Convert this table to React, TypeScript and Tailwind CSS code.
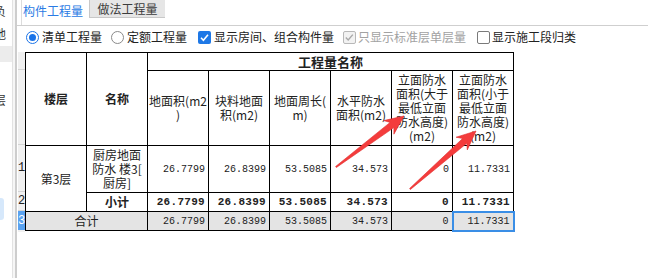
import React from 'react';

const CJK = { fontFamily: '"Noto Sans CJK SC", "Noto Sans", sans-serif' };
const MONO = { fontFamily: '"Liberation Mono", "DejaVu Sans Mono", monospace' };

const values = ['26.7799', '26.8399', '53.5085', '34.573', '0', '11.7331'];

const headers: string[][] = [
  ['地面积(m2', ')'],
  ['块料地面', '积(m2)'],
  ['地面周长(', 'm)'],
  ['水平防水', '面积(m2)'],
  ['立面防水', '面积(大于', '最低立面', '防水高度)', '(m2)'],
  ['立面防水', '面积(小于', '最低立面', '防水高度)', '(m2)'],
];

const arrows = [
  { tail: [336, 167], tip: [404, 116] },
  { tail: [410, 189], tip: [476, 131] },
];

// tapered arrow like a screenshot-tool annotation
function arrowPoints(tail: number[], tip: number[]) {
  const dx = tip[0] - tail[0];
  const dy = tip[1] - tail[1];
  const len = Math.hypot(dx, dy);
  const ux = dx / len;
  const uy = dy / len;
  const nx = -uy;
  const ny = ux;
  const neck = [tip[0] - ux * 19, tip[1] - uy * 19];
  const inner = [tip[0] - ux * 15, tip[1] - uy * 15];
  const p = (b: number[], s: number) => `${(b[0] + nx * s).toFixed(1)},${(b[1] + ny * s).toFixed(1)}`;
  return [p(tail, 0.6), p(inner, 3.2), p(neck, 8.5), `${tip[0]},${tip[1]}`, p(neck, -8.5), p(inner, -3.2), p(tail, -0.6)].join(' ');
}

const Radio = ({ on }: { on?: boolean }) => (
  <span className={`flex h-[13px] w-[13px] items-center justify-center rounded-full border bg-white ${on ? 'border-[#1a73e8]' : 'border-[#8a8a8a]'}`}>
    {on && <span className="h-[7px] w-[7px] rounded-full bg-[#1a73e8]" />}
  </span>
);

const Check = ({ state }: { state: 'on' | 'off' | 'disabled' }) => {
  if (state === 'on')
    return (
      <span className="flex h-[13px] w-[13px] items-center justify-center rounded-[2px] bg-[#1e78e6]">
        <svg width="11" height="11" viewBox="0 0 11 11">
          <path d="M2 5.8 L4.4 8.2 L9 2.8" fill="none" stroke="#fff" strokeWidth="1.6" />
        </svg>
      </span>
    );
  if (state === 'disabled')
    return (
      <span className="flex h-[13px] w-[13px] items-center justify-center rounded-[2px] border border-[#b8b8b8] bg-[#f2f2f2]">
        <svg width="11" height="11" viewBox="0 0 11 11">
          <path d="M1.8 5.6 L4.2 8 L8.8 2.6" fill="none" stroke="#a8a8a8" strokeWidth="1.4" />
        </svg>
      </span>
    );
  return <span className="block h-[13px] w-[13px] rounded-[2px] border border-[#7a7a7a] bg-white" />;
};

const App = () => {
  return (
    <div className="relative flex h-[278px] w-[648px] overflow-hidden bg-white text-[12px] text-[#222]" style={CJK}>
      {/* left side panel, cut off */}
      <div className="flex w-[13px] flex-col overflow-hidden border-r border-[#e2e2e2] text-[#333]">
        <div className="flex h-[22px] items-center -ml-[6px]">负</div>
        <div className="flex h-[24px] items-center -ml-[6px]">地</div>
        <div className="h-[16px] bg-[#ececec]" />
        <div className="h-[28px]" />
        <div className="flex h-[20px] items-center -ml-[6px]">层</div>
        <div className="h-[88px]" />
        <div className="h-[22px] w-[4px] rounded-r-[3px] bg-[#d6e8fb]" />
      </div>
      <div className="w-[2px] bg-[#f6f6f6]" />
      <div className="w-[2px] bg-[#cdcdcd]" />

      {/* main panel */}
      <div className="flex flex-1 flex-col">
        {/* tabs */}
        <div className="flex h-[26px] items-start border-b border-[#cfcfcf]">
          <div className="ml-[4px] flex h-[25px] w-[68px] items-start border-l border-[#dcdcdc] bg-white pl-[1px] pt-[2px] text-[#2a7be4]">
            构件工程量
          </div>
          <div className="flex h-[18px] w-[76px] items-center justify-center border-b border-l border-[#c8c8c8] bg-[#e6e6e6] text-[#3c3c3c]">
            做法工程量
          </div>
        </div>

        {/* options */}
        <div className="flex h-[22px] items-center">
          <span className="ml-[9px]"><Radio on /></span>
          <span className="ml-[3px]">清单工程量</span>
          <span className="ml-[9px]"><Radio /></span>
          <span className="ml-[3px]">定额工程量</span>
          <span className="ml-[11px]"><Check state="on" /></span>
          <span className="ml-[3px]">显示房间、组合构件量</span>
          <span className="ml-[9px]"><Check state="disabled" /></span>
          <span className="ml-[2px] text-[#a2a2a2]">只显示标准层单层量</span>
          <span className="ml-[11px]"><Check state="off" /></span>
          <span className="ml-[2px]">显示施工段归类</span>
        </div>

        {/* grid */}
        <div className="mt-[4px] flex">
          <div className="ml-[1px] flex w-[7px] flex-col overflow-hidden bg-[#f0f0f0] text-[12px] leading-none" style={MONO}>
            <div className="h-[18px] border-b border-[#d4d4d4]" />
            <div className="h-[75px] border-b border-[#d4d4d4]" />
            <div className="flex h-[47px] items-center border-b border-[#d4d4d4]">1</div>
            <div className="flex h-[19px] items-center border-b border-[#d4d4d4]">2</div>
            <div className="flex h-[19px] items-center bg-[#5aa2f0] text-white">3</div>
          </div>

          <table className="w-[489px] table-fixed border-collapse">
            <colgroup>
              {Array.from({ length: 8 }).map((_, i) => (
                <col key={i} className="w-[61px]" />
              ))}
            </colgroup>
            <thead>
              <tr className="h-[18px]">
                <th rowSpan={2} className="border border-black font-bold">楼层</th>
                <th rowSpan={2} className="border border-black font-bold">名称</th>
                <th colSpan={6} className="border border-black p-0 text-[13px] font-bold leading-none">工程量名称</th>
              </tr>
              <tr className="h-[75px]">
                {headers.map((lines, i) => (
                  <th key={i} className="border border-black p-0 text-center font-normal leading-[14px]">
                    {lines.map((l, j) => (
                      <div key={j} className="whitespace-nowrap">{l}</div>
                    ))}
                  </th>
                ))}
              </tr>
            </thead>
            <tbody>
              <tr className="h-[47px]">
                <td rowSpan={2} className="border border-black text-center">第3层</td>
                <td className="border border-black p-0 text-center leading-[14px]">
                  <div>厨房地面</div>
                  <div className="whitespace-nowrap">防水 楼3[</div>
                  <div>厨房]</div>
                </td>
                {values.map((v, i) => (
                  <td key={i} className="border border-black pr-[3px] text-right text-[10px]" style={MONO}>{v}</td>
                ))}
              </tr>
              <tr className="h-[19px]">
                <td className="border border-black p-0 text-center font-bold">小计</td>
                {values.map((v, i) => (
                  <td key={i} className="border border-black pr-[3px] text-right text-[11px] font-bold tracking-[0.3px]" style={MONO}>{v}</td>
                ))}
              </tr>
              <tr className="h-[19px] bg-[#e4e4e4]">
                <td colSpan={2} className="border border-black p-0 text-center">合计</td>
                {values.map((v, i) => (
                  <td
                    key={i}
                    className={`pr-[3px] text-right text-[10px] ${i === 5 ? 'border-2 border-[#3a8ee6]' : 'border border-black'}`}
                    style={MONO}
                  >
                    {v}
                  </td>
                ))}
              </tr>
            </tbody>
          </table>
        </div>
      </div>

      {/* red annotation arrows */}
      <svg className="pointer-events-none absolute left-0 top-0" width="648" height="278">
        {arrows.map((a, i) => (
          <polygon key={i} points={arrowPoints(a.tail, a.tip)} fill="#f43c3c" stroke="#e02a2a" strokeWidth="0.6" strokeLinejoin="round" />
        ))}
      </svg>
    </div>
  );
};

export default App;
